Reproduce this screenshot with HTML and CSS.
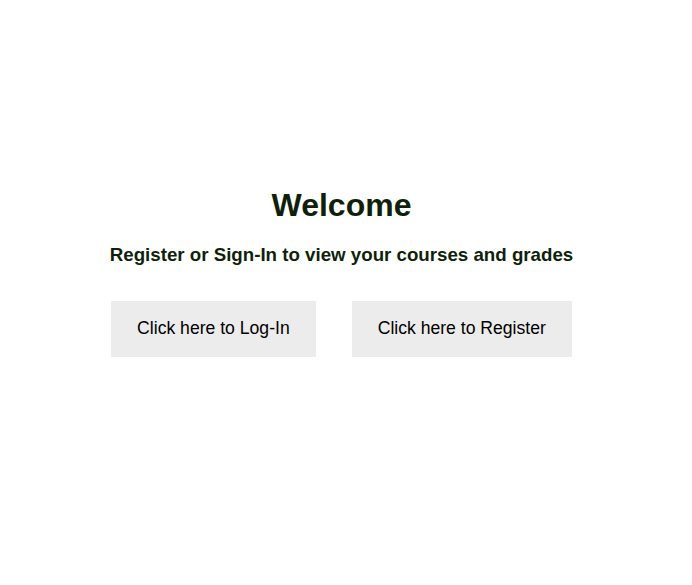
FILE: index.html
```html
<!DOCTYPE html>
<html>
<head>
<meta charset="utf-8">
<link rel="stylesheet" href="styles.css">
</head>
<body>
<main class="page">
  <section class="welcome">
    <h1 class="title">Welcome</h1>
    <h3 class="subtitle">Register or Sign-In to view your courses and grades</h3>
    <div class="actions">
      <button class="btn">Click here to Log-In</button>
      <button class="btn">Click here to Register</button>
    </div>
  </section>
</main>
</body>
</html>
```
FILE: styles.css
```css
html, body {
  margin: 0;
  padding: 0;
  background: #ffffff;
}
body {
  font-family: "Liberation Sans", Arial, Helvetica, sans-serif;
}
.page {
  box-sizing: border-box;
  height: 585px;
  display: flex;
  align-items: center;
  justify-content: center;
  padding: 0 9px 42px 0;
}
.welcome {
  display: flex;
  flex-direction: column;
  align-items: center;
}
.title {
  margin: 0;
  font-size: 32px;
  font-weight: bold;
  color: #0f1f0a;
  line-height: 37px;
}
.subtitle {
  margin: 20px 0 0;
  font-size: 18.72px;
  font-weight: bold;
  color: #0f1f0a;
  line-height: 22px;
}
.actions {
  display: flex;
  gap: 36px;
  margin-top: 35px;
}
.btn {
  font-family: "Liberation Sans", Arial, Helvetica, sans-serif;
  font-size: 17.6px;
  color: #000;
  background: #ececec;
  border: none;
  padding: 0 26px;
  height: 56px;
  cursor: pointer;
}
```
